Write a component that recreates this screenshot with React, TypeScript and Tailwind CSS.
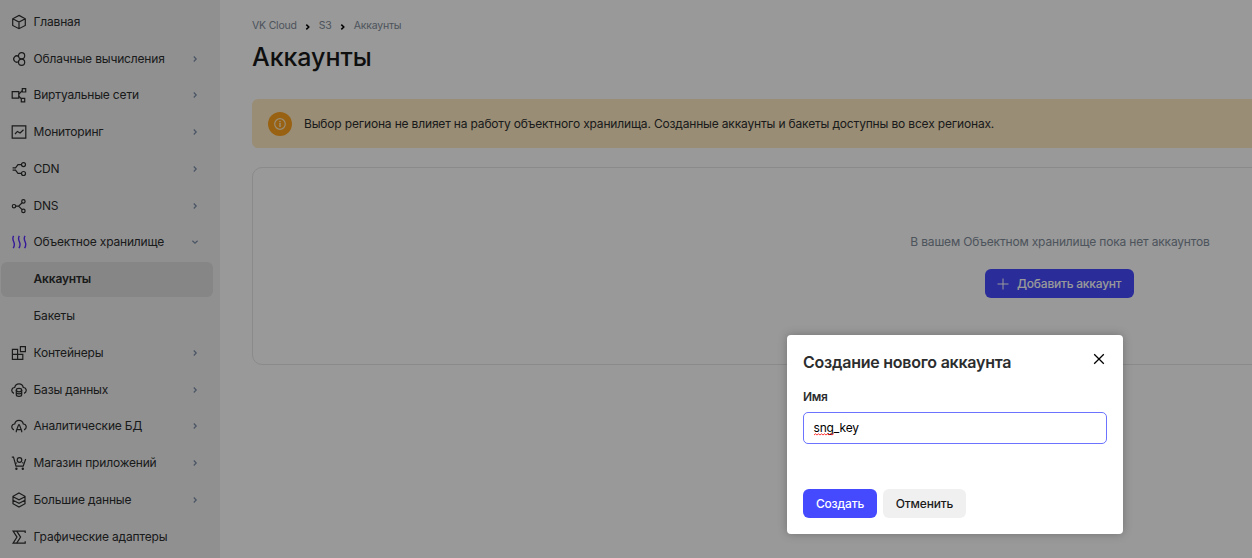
import type { ReactNode } from "react";

const icons: Record<string, ReactNode> = {
  home: <path d="M8 1.400 14.300 4.800v6.700L8 14.700 1.700 11.500V4.800ZM1.700 4.800 8 8l6.300-3.200M8 8v6.700" />,
  compute: (
    <>
      <circle cx="10.6" cy="4.7" r="3.100" />
      <circle cx="10.6" cy="11.3" r="3.100" />
      <path d="M7.800 5.600A3.100 3.100 0 1 0 7.800 10.400" />
    </>
  ),
  network: (
    <>
      <path d="M1.2 4.6h6.6v6.6H1.2zM11.3 1.6h3.400v3.400h-3.400zM10.3 11.400h3.4v3.400h-3.4z" />
      <path d="M7.8 7 11.3 3.8M7.8 9.3l2.7 2.6" />
    </>
  ),
  monitoring: (
    <>
      <path d="M1.2 1.9h13.6v12.2H1.2z" />
      <path d="m4 10 2.4-2.6L9.1 9l3.4-3.2" />
    </>
  ),
  cdn: (
    <>
      <circle cx="12.5" cy="3.6" r="2" />
      <circle cx="12.5" cy="12.5" r="2" />
      <path d="M1.6 6.800h2.900L7 3.7h3.400M1.6 9.200h2.900L7 12.4h3.400" />
    </>
  ),
  dns: (
    <>
      <circle cx="3" cy="8.2" r="1.7" />
      <circle cx="12.4" cy="3.4" r="1.7" />
      <circle cx="12.4" cy="12.9" r="1.7" />
      <path d="M4.8 8.2h2.8L11.2 4.7M7.6 8.2l3.5 3.5" />
    </>
  ),
  storage: (
    <path
      d="M2.600 1.800C1.200 4.200 1.800 5.800 2.700 7.700s1 4-.5 6.400M8.300 1.800C6.900 4.200 7.500 5.800 8.400 7.700s1 4-.5 6.400M14 1.800c-1.400 2.400-.8 4 .1 5.900s1 4-.5 6.400"
      stroke="#5a2bff"
      strokeWidth="1.4"
    />
  ),
  containers: <path d="M1.400 4.400h5.200v10H1.400zM1.400 9.400h10.400v5H1.400M6.600 9.400v5M9.400 1.600h5v5h-5z" />,
  database: (
    <>
      <path d="M2.900 11.400C-.4 9.800.4 5.700 3.700 5.500 4.800.7 11.200.7 12.300 5.500c3.300.2 4.100 4.300.8 5.900" />
      <ellipse cx="8" cy="8.100" rx="2.700" ry="1.700" />
      <path d="M5.300 8.100v4.600c0 2.200 5.400 2.200 5.400 0V8.100M5.300 10.300c0 2.200 5.400 2.200 5.400 0" />
    </>
  ),
  analytics: (
    <>
      <path d="M2.900 11.900C-.4 10.300.4 6.200 3.700 6 4.800 1.200 11.200 1.200 12.300 6c3.300.2 4.100 4.300.8 5.900" />
      <path d="M5.300 14.200v-1.400L7.600 6.900h.8l2.300 5.900v1.400M6 11.700h4" />
    </>
  ),
  store: (
    <>
      <path d="M.8 2.100h1.700L5 11.100h7.200L14.700 4" />
      <circle cx="8.500" cy="5" r="2.300" />
      <path d="M5.600 7.600 4.700 8.500M11.400 7.400l1 1" />
      <circle cx="5.400" cy="13.800" r=".6" fill="currentColor" />
      <circle cx="11.800" cy="13.800" r=".6" fill="currentColor" />
    </>
  ),
  bigdata: <path d="M8 .9 14 4.300v7.400L8 15.100 2 11.700V4.300ZM2 4.700l6 3.200 6-3.200M2 8.200l6 3.200 6-3.200" />,
  gpu: (
    <>
      <path d="M14.200 4V2.100H2.100L6 8.100l-3.900 6h12.100v-1.900" />
      <path d="m5.700 2.100 3.900 6-3.900 6" />
    </>
  ),
};

function Chevron({ down = false }: { down?: boolean }) {
  return (
    <svg className="h-2 w-2" viewBox="0 0 8 8" fill="none" stroke="#7b8da8" strokeWidth="1.2">
      <path d={down ? "m1.400 2.800 2.600 2.400 2.600-2.400" : "M2.800 1.500 5.200 4 2.800 6.500"} />
    </svg>
  );
}

const items: { label: string; icon?: string; arrow?: "right" | "down"; active?: boolean }[] = [
  { label: "Главная", icon: "home" },
  { label: "Облачные вычисления", icon: "compute", arrow: "right" },
  { label: "Виртуальные сети", icon: "network", arrow: "right" },
  { label: "Мониторинг", icon: "monitoring", arrow: "right" },
  { label: "CDN", icon: "cdn", arrow: "right" },
  { label: "DNS", icon: "dns", arrow: "right" },
  { label: "Объектное хранилище", icon: "storage", arrow: "down" },
  { label: "Аккаунты", active: true },
  { label: "Бакеты" },
  { label: "Контейнеры", icon: "containers", arrow: "right" },
  { label: "Базы данных", icon: "database", arrow: "right" },
  { label: "Аналитические БД", icon: "analytics", arrow: "right" },
  { label: "Магазин приложений", icon: "store", arrow: "right" },
  { label: "Большие данные", icon: "bigdata", arrow: "right" },
  { label: "Графические адаптеры", icon: "gpu" },
];

function Sidebar() {
  return (
    <nav className="flex w-[220px] shrink-0 flex-col gap-[2px] bg-[#f0f0f0] pt-[4.360px] pr-[7px] pl-px text-[12px] tracking-[-0.170px] text-[#2c2d2e]">
      {items.map((item) => (
        <div
          key={item.label}
          className={`flex h-[34.790px] shrink-0 items-center rounded-md pr-[14px] pl-[10px] ${item.active ? "bg-[#dfdfdf] font-semibold" : ""}`}
        >
          <span className="mr-[6.500px] h-4 w-4 shrink-0">
            {item.icon && (
              <svg className="h-4 w-4" viewBox="0 0 16 16" fill="none" stroke="currentColor" strokeWidth="1.200">
                {icons[item.icon]}
              </svg>
            )}
          </span>
          <span className="flex-1 whitespace-nowrap">{item.label}</span>
          {item.arrow && <Chevron down={item.arrow === "down"} />}
        </div>
      ))}
    </nav>
  );
}

function Crumb() {
  return (
    <svg className="mt-px h-2 w-2" viewBox="0 0 8 8" fill="none" stroke="#000" strokeWidth="1.500">
      <path d="M2.300 1.600 4.800 4 2.300 6.400" />
    </svg>
  );
}

function Main() {
  return (
    <main className="flex min-w-0 flex-1 flex-col overflow-hidden bg-white pl-8">
      <div className="mt-[18px] flex h-4 items-center text-[10.500px] leading-4 tracking-[-0.200px] text-[#818c99]">
        <span>VK Cloud</span>
        <span className="mr-[7px] ml-[7px]"><Crumb /></span>
        <span>S3</span>
        <span className="mr-[7px] ml-[7px]"><Crumb /></span>
        <span>Аккаунты</span>
      </div>
      <h1 className="mt-[7px] h-8 text-[25px] leading-[33px] font-medium tracking-[-0.050px] text-[#1a1a1a]">Аккаунты</h1>
      <div className="mt-[26px] flex h-[49px] w-[1614px] shrink-0 items-center rounded-md bg-[#ffebc4] pl-4 text-[12px] tracking-[-0.167px] text-[#2c2d2e]">
        <span className="mr-3 flex h-6 w-6 items-center justify-center rounded-full bg-[#ffa31f]">
          <svg className="h-3 w-3" viewBox="0 0 12 12" fill="none" stroke="#ffebc4" strokeWidth="1.200">
            <circle cx="6" cy="6" r="5.300" />
            <path d="M6 5.100v3.900M6 2.900v1.400" strokeWidth="1.500" />
          </svg>
        </span>
        <span className="whitespace-nowrap">
          Выбор региона не влияет на работу объектного хранилища. Созданные аккаунты и бакеты доступны во всех регионах.
        </span>
      </div>
      <section className="mt-[19px] flex h-[198px] w-[1615px] shrink-0 flex-col items-center rounded-[10px] border border-[#e6e6e6] pt-[65px] text-[12px] tracking-[-0.170px]">
        <p className="h-[18px] pl-px leading-[18px] text-[#818c99]">В вашем Объектном хранилище пока нет аккаунтов</p>
        <button className="mt-[18px] flex h-[29px] w-[149px] items-center rounded-md bg-[#454aff] pl-[12px] font-medium tracking-[-0.220px] text-white">
          <svg className="mr-[8px] h-3 w-3" viewBox="0 0 12 12" stroke="currentColor" strokeWidth="1">
            <path d="M6 .5v11M.5 6h11" />
          </svg>
          Добавить аккаунт
        </button>
      </section>
    </main>
  );
}

function Dialog() {
  return (
    <div className="absolute top-[335px] left-[787px] flex h-[199px] w-[336px] flex-col rounded-[4px] bg-white px-4 text-[#2c2d2e] shadow-[0_0_10px_rgba(0,0,0,0.250)]">
      <div className="flex justify-between pt-[15px]">
        <h2 className="h-6 text-[16px] leading-6 font-semibold tracking-[-0.240px]">Создание нового аккаунта</h2>
        <button className="mt-[3px] mr-[2px] h-3 w-3 text-black" aria-label="Закрыть">
          <svg className="h-3 w-3" viewBox="0 0 12 12" stroke="currentColor" strokeWidth="1.300">
            <path d="m1.200 1.200 9.600 9.600M10.800 1.200 1.200 10.800" />
          </svg>
        </button>
      </div>
      <label className="mt-[14px] h-[18px] text-[12px] leading-[18px] font-semibold tracking-[-0.300px]">Имя</label>
      <div className="mt-[6px] flex h-8 items-center rounded-[5px] border border-[#6b73ff] pl-[9.500px] text-[12px] tracking-[-0.150px] text-black">
        <span className="relative">
          sng
          <svg className="absolute bottom-[1px] left-0 h-[3px] w-full" fill="none" stroke="#f00" strokeWidth=".8">
            <path d="M0 2 1.500 .8 3 2 4.500 .8 6 2 7.500 .8 9 2 10.500 .8 12 2 13.500 .8 15 2 16.500 .8 18 2 19.500 .8 21 2" />
          </svg>
        </span>
        _key
      </div>
      <div className="mt-[45px] flex gap-[6px] text-[12px] font-medium tracking-[-0.160px]">
        <button className="h-[29px] w-[74px] rounded-md bg-[#454aff] text-white">Создать</button>
        <button className="h-[29px] w-[83px] rounded-md bg-[#f0f0f0] text-[#1a1a1a]">Отменить</button>
      </div>
    </div>
  );
}

export default function App() {
  return (
    <div className="relative flex h-[558px] w-[1252px] overflow-hidden font-['Inter','Liberation_Sans',sans-serif]">
      <Sidebar />
      <Main />
      <div className="absolute inset-0 bg-black/40" />
      <Dialog />
    </div>
  );
}
